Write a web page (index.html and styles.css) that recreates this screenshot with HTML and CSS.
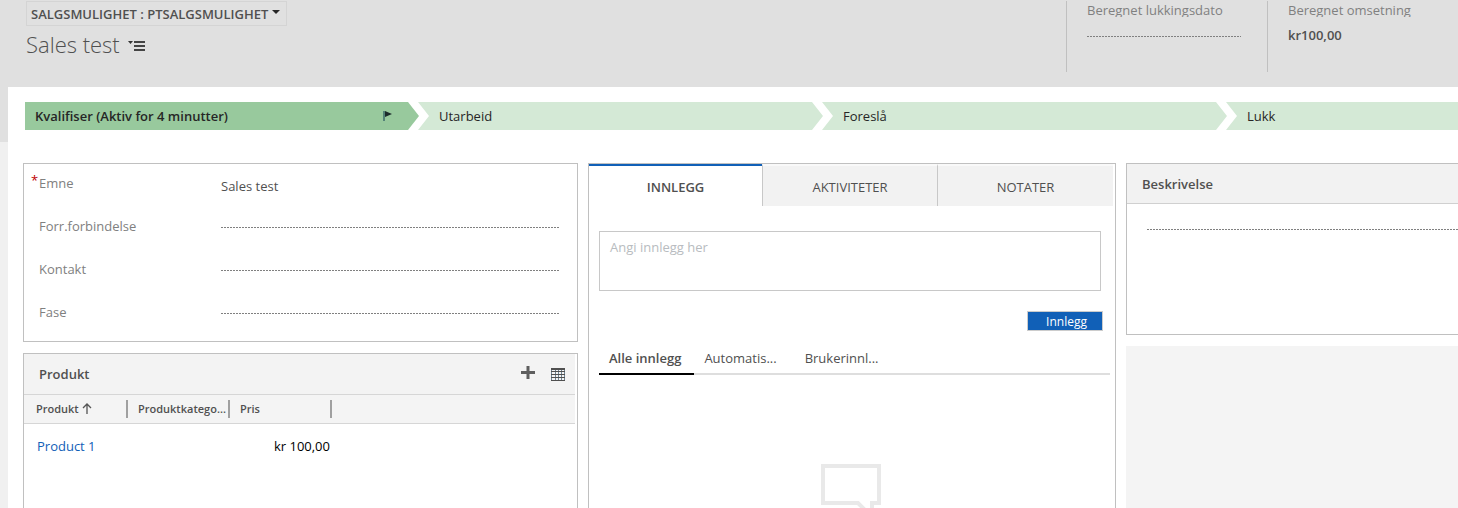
FILE: index.html
```html
<!DOCTYPE html>
<html lang="no">
<head>
<meta charset="utf-8">
<title>Salgsmulighet: Sales test</title>
<link rel="stylesheet" href="styles.css">
</head>
<body>
<header class="page-header">
  <div class="record">
    <button class="form-picker" type="button">SALGSMULIGHET : PTSALGSMULIGHET
      <svg class="caret" width="8" height="5" viewBox="0 0 8 5"><path d="M0 0h8L4 4z" fill="#262626"/></svg>
    </button>
    <div class="title-row">
      <h1 class="title">Sales test</h1>
      <button class="menu-button" type="button" aria-label="Meny">
        <svg width="18" height="12" viewBox="0 0 18 12"><path d="M0 1h5L2.500 4z" fill="#333"/><path d="M6 1h11v2H6zM6 5h11v2H6zM6 9h11v2H6z" fill="#444"/></svg>
      </button>
    </div>
  </div>
  <div class="summary">
    <label class="summary-label" for="close-date">Beregnet lukkingsdato</label>
    <input class="summary-empty" id="close-date" type="text">
  </div>
  <div class="summary">
    <div class="summary-label">Beregnet omsetning</div>
    <div class="summary-value">kr100,00</div>
  </div>
</header>
<main class="form">
  <nav class="process">
    <button class="stage stage-active" type="button">Kvalifiser (Aktiv for 4 minutter)
      <svg width="10" height="12" viewBox="0 0 10 12"><path d="M1 1v10" stroke="#3d6b6b" stroke-width="1.500"/><path d="M2 1l7 3-7 3z" fill="#1c2b2b"/></svg>
    </button>
    <button class="stage" type="button">Utarbeid</button>
    <button class="stage" type="button">Foreslå</button>
    <button class="stage stage-last" type="button">Lukk</button>
  </nav>
  <div class="columns">
    <div class="column">
      <section class="card fields">
        <div class="field"><label for="emne"><span class="required">*</span>Emne</label><input class="filled" id="emne" type="text" value="Sales test"></div>
        <div class="field"><label for="forr">Forr.forbindelse</label><input id="forr" type="text"></div>
        <div class="field"><label for="kontakt">Kontakt</label><input id="kontakt" type="text"></div>
        <div class="field"><label for="fase">Fase</label><input id="fase" type="text"></div>
      </section>
      <section class="card products">
        <div class="products-head">
          <h2>Produkt</h2>
          <button class="add" type="button" aria-label="Legg til"><svg width="14" height="14" viewBox="0 0 14 14"><path d="M5.500 0h3v5H14v3H8.500v5h-3V8H0V5h5.500z" fill="#5e5e5e"/></svg></button>
          <button type="button" aria-label="Vis liste"><svg width="14" height="13" viewBox="0 0 14 13"><path d="M.5 0v13M4.500 1v12M7.500 1v12M10.500 1v12M13.500 0v13" stroke="#6e8494"/><path d="M0 1h14" stroke="#505050" stroke-width="2"/><path d="M0 3.500h14M0 6.500h14M0 9.500h14M0 12.500h14" stroke="#505050"/></svg></button>
        </div>
        <table class="grid">
          <thead><tr>
            <th><span>Produkt <svg width="10" height="11" viewBox="0 0 10 11"><path d="M5 11V1M1 5l4-4 4 4" fill="none" stroke="#555" stroke-width="1.300"/></svg></span></th>
            <th><span>Produktkatego...</span></th>
            <th><span>Pris</span></th>
            <th class="rest"></th>
          </tr></thead>
          <tbody><tr><td><a href="#product">Product 1</a></td><td></td><td class="amount">kr 100,00</td><td></td></tr></tbody>
        </table>
      </section>
    </div>
    <section class="card social">
      <div class="tabs">
        <button class="tab tab-active" type="button">INNLEGG</button>
        <button class="tab" type="button">AKTIVITETER</button>
        <button class="tab" type="button">NOTATER</button>
      </div>
      <div class="posts">
        <textarea class="post-text" aria-label="Innlegg" placeholder="Angi innlegg her"></textarea>
        <button class="post-button" type="button">Innlegg</button>
        <div class="filters">
          <button class="filter filter-active" type="button">Alle innlegg</button>
          <button class="filter" type="button">Automatis...</button>
          <button class="filter" type="button">Brukerinnl...</button>
        </div>
        <svg class="bubble" width="60" height="56" viewBox="0 0 60 56"><path d="M2 2h56v37h-7v14L37 39H2z" fill="none" stroke="#e9e9e9" stroke-width="4"/></svg>
      </div>
    </section>
    <div class="column">
      <section class="card description">
        <label class="description-head" for="description">Beskrivelse</label>
        <div class="description-body"><input id="description" type="text"></div>
      </section>
      <div class="filler"></div>
    </div>
  </div>
</main>
</body>
</html>
```
FILE: styles.css
```css
* { box-sizing: border-box; }
html { height: 100%; }
body {
  margin: 0;
  height: 100%;
  display: flex;
  flex-direction: column;
  overflow: hidden;
  background: linear-gradient(#e0e0e0 142px, #f0f0f0 142px);
  font: 13px/20px "Open Sans", "Noto Sans", sans-serif;
  color: #505050;
}
button, input, textarea {
  font: inherit;
  color: inherit;
  border: 0;
  padding: 0;
  margin: 0;
  background: none;
  border-radius: 0;
}
svg { flex: none; }
h1, h2 { margin: 0; }

.page-header { display: flex; flex: none; height: 87px; padding-top: 1px; }
.record { flex: 1; padding-left: 26px; }
.form-picker {
  display: flex;
  align-items: center;
  gap: 4px;
  height: 25px;
  padding: 0 6px 0 4px;
  border: 1px solid #d4d4d4;
  font-weight: 600;
}
.caret { margin-bottom: 3px; }
.title-row { display: flex; align-items: center; gap: 8px; height: 36px; }
.title { font-size: 22px; font-weight: 300; line-height: 36px; }
.menu-button { display: flex; padding-top: 4px; }
.summary { width: 201px; height: 71px; padding-left: 20px; border-left: 1px solid #c0c0c0; }
.summary:last-child { width: 191px; }
.summary-label { display: block; height: 16px; line-height: 18px; overflow: hidden; color: #808080; }
.summary-value { font-weight: 600; padding-top: 8px; }
.summary-empty { display: block; width: 154px; height: 20px; }

/* Empty values show a fine dashed rule along their bottom edge. */
.summary-empty, .field input, .description-body input {
  background: repeating-linear-gradient(90deg, #808080 0 2px, transparent 2px 3px) bottom / 100% 1px no-repeat;
}

.form { flex: 1; min-height: 0; display: flex; flex-direction: column; margin-left: 8px; padding: 15px 0 0 15px; background: #fff; }
.process { display: flex; flex: none; padding-left: 2px; color: #262626; }
.stage {
  flex: 0 0 405px;
  display: flex;
  align-items: center;
  justify-content: space-between;
  height: 28px;
  margin-left: -1px;
  padding: 0 26px 0 21px;
  background: #d4e9d6;
  clip-path: polygon(0 0, calc(100% - 11px) 0, 100% 50%, calc(100% - 11px) 100%, 0 100%, 11px 50%);
}
.stage-active {
  flex-basis: 394px;
  margin-left: 0;
  padding-left: 10px;
  background: #98c99d;
  font-weight: 600;
  clip-path: polygon(0 0, calc(100% - 11px) 0, 100% 50%, calc(100% - 11px) 100%, 0 100%);
}
.stage-last { flex: 1; clip-path: polygon(0 0, 100% 0, 100% 100%, 0 100%, 11px 50%); }

.columns { flex: 1; min-height: 0; display: grid; grid-template-columns: 555fr 528fr 332fr; gap: 10px; padding-top: 33px; }
.column { display: flex; flex-direction: column; gap: 11px; min-width: 0; }
.card { border: 1px solid #c0c0c0; background: #fff; }

.fields { padding: 5px 17px 0 15px; }
.field { display: flex; align-items: flex-start; height: 43px; }
.field label { position: relative; flex: 0 0 182px; line-height: 28px; color: #808080; }
.required { position: absolute; left: -8px; top: -3px; color: #c00000; }
.field input { flex: 1; min-width: 0; height: 16px; }
.field .filled { height: 34px; background: none; }

.products { flex: 1; padding-right: 2px; border-bottom: 0; }
.products-head { display: flex; align-items: center; gap: 16px; height: 40px; padding: 0 10px 0 15px; background: #f3f3f3; }
.products-head button { display: flex; }
.products-head .add { padding-bottom: 3px; }
h2, .description-head { font-size: 13px; font-weight: 600; color: #505050; }
h2 { flex: 1; }
.grid { width: 100%; border-collapse: separate; border-spacing: 0; table-layout: fixed; }
.grid th { width: 102px; height: 30px; padding: 0 0 0 10px; background: #f4f4f4; border: solid #d6d6d6; border-width: 1px 0; font-size: 11px; font-weight: 600; text-align: left; }
.grid th:first-child { width: 104px; padding-left: 12px; }
.grid .rest { width: auto; }
.grid th span { display: block; line-height: 18px; border-right: 2px solid #a0a0a0; white-space: nowrap; }
.grid th svg { vertical-align: -1px; }
.grid td { height: 44px; padding: 0; }
.grid td:first-child { padding-left: 13px; }
.grid a { color: #1160b7; text-decoration: none; }
.grid .amount { padding-right: 2px; color: #000; text-align: right; }

.social { border-bottom: 0; min-width: 0; }
.tabs { display: grid; grid-template-columns: 173fr 175fr 176fr; height: 42px; padding-right: 2px; }
.tab { background: #f2f2f2; border-top: 2px solid #f9f9f9; border-left: 1px solid #c8c8c8; padding-top: 1px; }
.tab-active { background: #fff; border-top-color: #1160b7; border-left: 0; font-weight: 600; }
.posts { display: flex; flex-direction: column; padding: 25px 5px 0 10px; }
.post-text { display: block; height: 60px; margin-right: 9px; padding: 5px 10px; border: 1px solid #c8c8c8; resize: none; }
.post-text::placeholder { color: #b8bcc0; }
.post-button { align-self: flex-end; width: 76px; height: 20px; margin: 20px 7px 0 0; padding: 1px 0 0 3px; border: 1px solid #ccc; background: #1160b7; color: #fff; font-size: 12px; line-height: 18px; }
.filters { display: flex; height: 32px; margin-top: 12px; border-bottom: 2px solid #dedede; }
.filter { height: 32px; padding: 0 18px 0 10px; border-bottom: 2px solid transparent; }
.filter-active { padding-right: 13px; border-color: #000; font-weight: 600; }
.bubble { align-self: center; margin: 89px 7px 0 0; }

.description { height: 172px; border-right: 0; }
.description-head { display: block; height: 40px; padding-left: 15px; line-height: 40px; background: #f2f2f2; border-bottom: 1px solid #d0d0d0; }
.description-body { padding: 10px 0 0 20px; }
.description-body input { display: block; width: 100%; height: 16px; }
.filler { flex: 1; background: #f4f4f4; }
```
